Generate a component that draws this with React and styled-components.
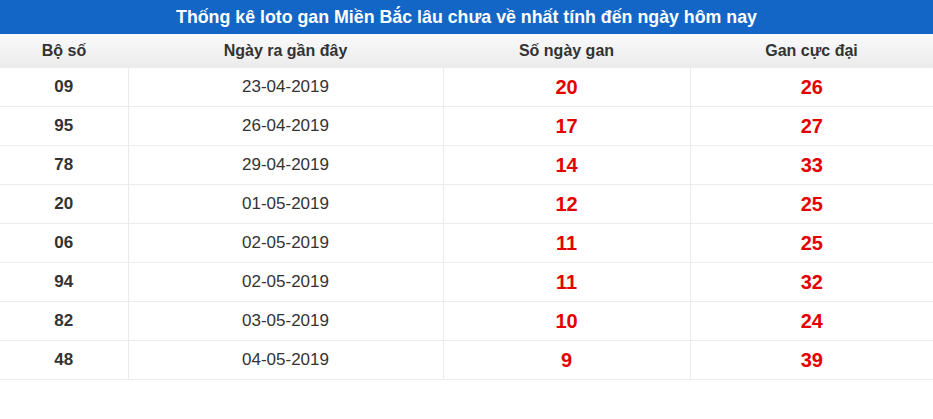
import React from "react";
import styled, { createGlobalStyle } from "styled-components";

const Global = createGlobalStyle`
  html, body { margin: 0; padding: 0; background: #fff; }
  body { font-family: "Liberation Sans", Arial, sans-serif; }
`;

const Wrap = styled.div`
  width: 933px;
`;

const Title = styled.div`
  height: 34px;
  background: #1466c6;
  color: #fff;
  font-weight: bold;
  font-size: 17.8px;
  display: flex;
  align-items: center;
  justify-content: center;
`;

const Table = styled.table`
  width: 100%;
  border-collapse: collapse;
  table-layout: fixed;
`;

const Th = styled.th`
  height: 34px;
  padding: 0;
  font-size: 16px;
  font-weight: bold;
  color: #333;
  background: linear-gradient(#fafafa, #ebebeb);
  text-align: center;
`;

const Tr = styled.tr`
  border-bottom: 1px solid #ebebeb;
`;

const Td = styled.td`
  height: 38px;
  padding: 0;
  text-align: center;
  border-left: 1px solid #ebebeb;
  &:first-child { border-left: none; }
  color: ${(p) => (p.$red ? "#e50000" : "#333")};
  font-size: ${(p) => (p.$red ? "20px" : "17px")};
  font-weight: ${(p) => (p.$red || p.$bold ? "bold" : "normal")};
`;

const rows = [
  ["09", "23-04-2019", "20", "26"],
  ["95", "26-04-2019", "17", "27"],
  ["78", "29-04-2019", "14", "33"],
  ["20", "01-05-2019", "12", "25"],
  ["06", "02-05-2019", "11", "25"],
  ["94", "02-05-2019", "11", "32"],
  ["82", "03-05-2019", "10", "24"],
  ["48", "04-05-2019", "9", "39"],
];

export default function App() {
  return (
    <Wrap>
      <Global />
      <Title>Thống kê loto gan Miền Bắc lâu chưa về nhất tính đến ngày hôm nay</Title>
      <Table>
        <colgroup>
          <col style={{ width: 128 }} />
          <col style={{ width: 315 }} />
          <col style={{ width: 247 }} />
          <col />
        </colgroup>
        <thead>
          <tr>
            <Th>Bộ số</Th>
            <Th>Ngày ra gần đây</Th>
            <Th>Số ngày gan</Th>
            <Th>Gan cực đại</Th>
          </tr>
        </thead>
        <tbody>
          {rows.map((r, i) => (
            <Tr key={i}>
              <Td $bold>{r[0]}</Td>
              <Td>{r[1]}</Td>
              <Td $red>{r[2]}</Td>
              <Td $red>{r[3]}</Td>
            </Tr>
          ))}
        </tbody>
      </Table>
    </Wrap>
  );
}
